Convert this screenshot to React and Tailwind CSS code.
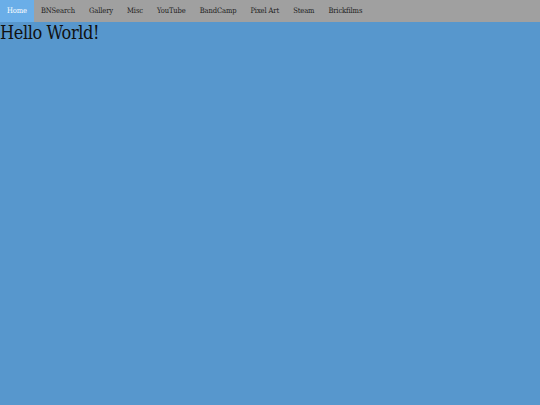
export default function App() {
  const items = ["Home", "BNSearch", "Gallery", "Misc", "YouTube", "BandCamp", "Pixel Art", "Steam", "Brickfilms"];
  return (
    <div className="w-[540px] h-[405px] bg-[#5797cd] overflow-hidden" style={{ fontFamily: '"DejaVu Serif Condensed", "DejaVu Serif", serif', fontStretch: "condensed" }}>
      <nav className="flex h-[22px] bg-[#a0a0a0]">
        {items.map((t, i) => (
          <a key={t} className={`flex items-center px-[7px] text-[7.5px] tracking-[-0.1px] ${i === 0 ? "bg-[#6aaee8] text-white" : "text-[#222]"}`}>{t}</a>
        ))}
      </nav>
      <h1 className="text-[18px] leading-[22px] tracking-[-0.4px] text-[#111]">Hello World!</h1>
    </div>
  );
}
